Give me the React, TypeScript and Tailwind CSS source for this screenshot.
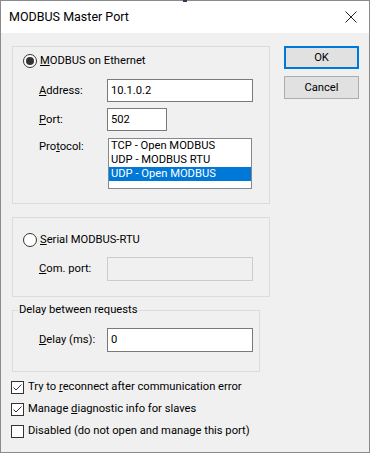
import React from "react";

function Radio({ checked }: { checked: boolean }) {
  return (
    <span className="w-[14px] h-[14px] rounded-full border border-[#333333] bg-white flex items-center justify-center shrink-0">
      {checked && <span className="w-[8px] h-[8px] rounded-full bg-[#333333]" />}
    </span>
  );
}

function Check({ checked }: { checked: boolean }) {
  return (
    <span className="w-[13px] h-[13px] border border-[#333333] bg-white flex items-center justify-center shrink-0">
      {checked && (
        <svg width="11" height="11" viewBox="0 0 11 11">
          <polyline points="1.5,5.5 4,8 9.5,2.5" fill="none" stroke="#333333" strokeWidth="1" />
        </svg>
      )}
    </span>
  );
}

export default function App() {
  return (
    <div className="w-[371px] h-[454px] bg-white font-['Roboto',sans-serif] text-[11.2px] text-black leading-[16px] whitespace-nowrap">
      <div className="relative w-[370px] h-[453px] border border-[#8a8a8a] flex flex-col">
        <span className="absolute -top-[1px] left-[182px] w-[4px] h-[2px] bg-[#2b3a55]" />
        <div className="h-[32px] bg-white flex items-center justify-between pl-[8px] pr-[12px] shrink-0">
          <span className="text-[12.5px]">MODBUS Master Port</span>
          <svg width="12" height="12" viewBox="0 0 12 12">
            <path d="M0.5 0.5 L11.5 11.5 M11.5 0.5 L0.5 11.5" stroke="#222" strokeWidth="1" />
          </svg>
        </div>
        <div className="flex-1 bg-[#f0f0f0] flex pl-[11px]">
          <div className="w-[258px] pt-[13px] flex flex-col">
            {/* Group 1 */}
            <div className="border border-[#dcdcdc] pt-[6px] pl-[10px] pb-[14px]">
              <div className="h-[16px] flex items-center">
                <Radio checked />
                <span className="ml-[3px]"><u>M</u>ODBUS on Ethernet</span>
              </div>
              <div className="pl-[16px]">
                <div className="mt-[10px] flex items-center">
                  <span className="w-[68px]"><u>A</u>ddress:</span>
                  <div className="w-[146px] h-[23px] border border-[#7a7a7a] bg-white flex items-center px-[3px]">10.1.0.2</div>
                </div>
                <div className="mt-[6px] flex items-center">
                  <span className="w-[68px]"><u>P</u>ort:</span>
                  <div className="w-[60px] h-[23px] border border-[#7a7a7a] bg-white flex items-center px-[3px]">502</div>
                </div>
                <div className="mt-[7px] flex items-start">
                  <span className="w-[68px] pt-[1px]">Pro<u>t</u>ocol:</span>
                  <div className="ml-[1px] w-[144px] h-[51px] border border-[#828790] bg-white flex flex-col leading-[14px]">
                    <div className="h-[14px] px-[2px]">TCP - Open MODBUS</div>
                    <div className="h-[14px] px-[2px]">UDP - MODBUS RTU</div>
                    <div className="h-[14px] px-[2px] bg-[#0078d7] text-white">UDP - Open MODBUS</div>
                  </div>
                </div>
              </div>
            </div>
            {/* Group 2 */}
            <div className="mt-[13px] border border-[#dcdcdc] pt-[14px] pl-[10px] pb-[15px]">
              <div className="h-[16px] flex items-center">
                <Radio checked={false} />
                <span className="ml-[3px]"><u>S</u>erial MODBUS-RTU</span>
              </div>
              <div className="pl-[16px] mt-[9px] flex items-center">
                <span className="w-[68px]"><u>C</u>om. port:</span>
                <div className="w-[146px] h-[24px] border border-[#cccccc] bg-[#f0f0f0]" />
              </div>
            </div>
            {/* Group 3 */}
            <fieldset className="mt-[6px] w-[248px] border border-[#dcdcdc]">
              <legend className="ml-[5px] px-[1px] leading-[14px]">Delay between requests</legend>
              <div className="pl-[26px] mt-[11px] pb-[19px] flex items-center">
                <span className="w-[68px]"><u>D</u>elay (ms):</span>
                <div className="w-[146px] h-[24px] border border-[#7a7a7a] bg-white flex items-center px-[3px]">0</div>
              </div>
            </fieldset>
            {/* Checkboxes */}
            <div className="mt-[4px] -ml-[1px] flex flex-col">
              <div className="h-[22px] flex items-center">
                <Check checked />
                <span className="ml-[4px]">Try to <u>r</u>econnect after communication error</span>
              </div>
              <div className="h-[22px] flex items-center">
                <Check checked />
                <span className="ml-[4px]">Manage <u>d</u>iagnostic info for slaves</span>
              </div>
              <div className="h-[22px] flex items-center">
                <Check checked={false} />
                <span className="ml-[4px]">Disabled (do not open and manage this port)</span>
              </div>
            </div>
          </div>
          <div className="ml-[14px] pt-[13px] flex flex-col">
            <button className="w-[75px] h-[23px] bg-[#e1e1e1] border-2 border-[#0078d7] flex items-center justify-center">OK</button>
            <button className="mt-[7px] w-[75px] h-[23px] bg-[#e1e1e1] border border-[#adadad] flex items-center justify-center">Cancel</button>
          </div>
        </div>
      </div>
    </div>
  );
}
